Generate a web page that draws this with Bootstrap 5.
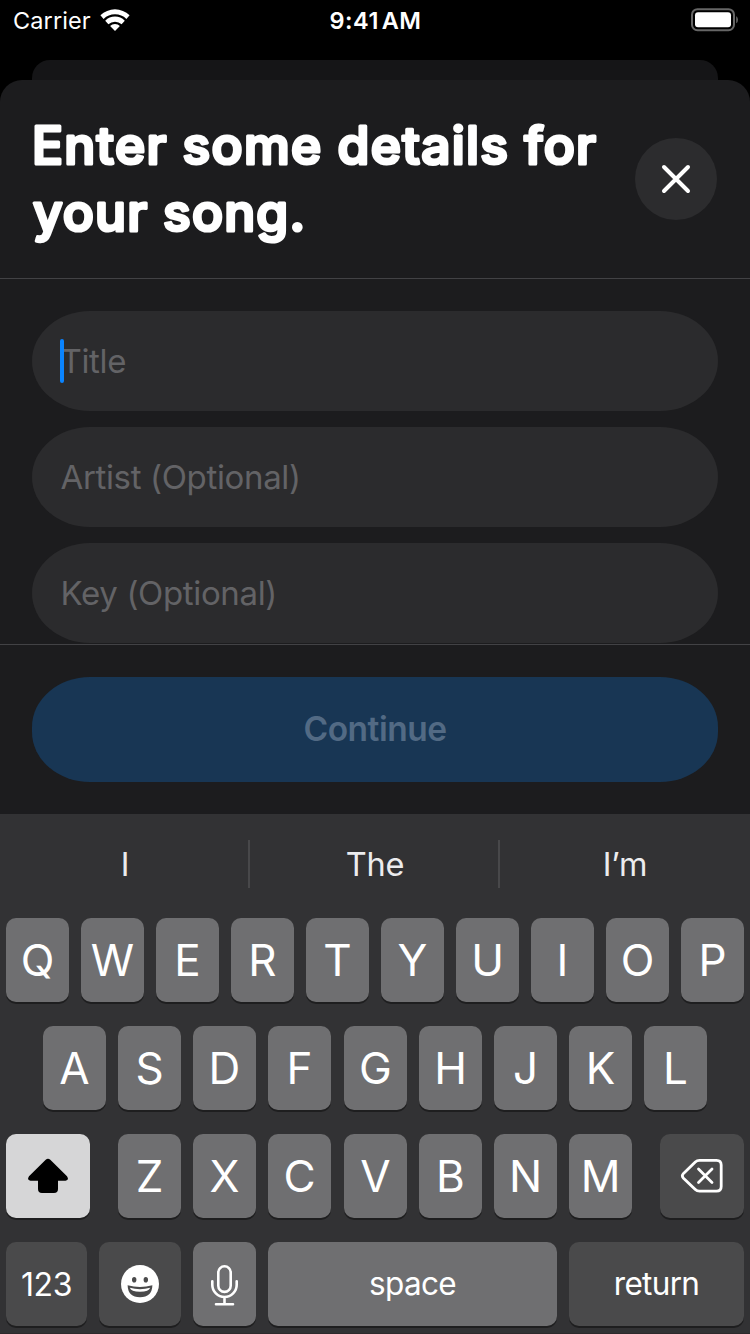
<!DOCTYPE html>
<html lang="en" data-bs-theme="dark">
<head>
<meta charset="utf-8">
<meta name="viewport" content="width=device-width, initial-scale=1">
<title>Song details</title>
<link rel="stylesheet" href="https://cdn.jsdelivr.net/npm/bootstrap@5.3.0/dist/css/bootstrap.min.css">
<style>
  body { width: 750px; height: 1334px; background: #000; color: #fff; font-family: Inter, "Liberation Sans", sans-serif; line-height: 1; }
  svg { display: block; }
  .status { height: 60px; padding: 0 12px 0 13px; }
  .status > div { height: 40px; flex: 1 1 0; font-size: 23.5px; }
  .status span { padding-top: 2px; }
  .carrier { letter-spacing: .1px; }
  .clock { font-weight: 600; letter-spacing: .5px; word-spacing: -3.5px; }
  .sheet-behind { height: 20px; margin: 0 32px; background: #151517; border-radius: 18px 18px 0 0; }
  .sheet { height: 734px; background: #1c1c1e; border-radius: 22px 22px 0 0; }
  .sheet-head { height: 199px; padding: 0 33px 0 32px; border-bottom: 1px solid #424245; }
  /* the round-joined outline softens the letter corners */
  .sheet-head text { font-size: 51.5px; font-weight: 500; fill: #fff; stroke: #fff; stroke-width: 3.2px; stroke-linejoin: round; stroke-linecap: round; }
  .close-btn { width: 82px; height: 82px; background: #2c2c2e; color: #fff; }
  .fields { height: 365px; padding: 32px 32px 0; gap: 16px; }
  .pill { border-radius: 58px / 50px; }
  .field { height: 100px; padding: 0 28.5px; background: #2b2b2d; color: #636366; font-size: 33px; letter-spacing: -.35px; flex: none; }
  .caret { left: 28px; top: 28px; width: 4px; height: 44px; border-radius: 2px; background: #0a84ff; }
  .sheet-foot { height: 170px; padding: 32px 32px 0; border-top: 1px solid #424245; }
  .go { height: 105px; background: #183654; color: #526a84; font-size: 33.5px; font-weight: 600; letter-spacing: -.5px; }
  .keyboard { height: 520px; background: #323234; padding: 0 6px; border-bottom: 1px solid #2d292b; }
  .suggest { height: 100px; margin: 0 -6px 4px; font-size: 32.5px; letter-spacing: -.2px; color: #ececee; }
  .suggest > div { width: 250px; padding-top: 2px; }
  .suggest i { width: 2px; height: 48px; right: 0; top: 26px; background: #48484a; }
  .keys { gap: 12px; height: 84px; margin-bottom: 24px; justify-content: center; }
  .key { width: 63px; height: 84px; border-radius: 10px; background: #6f6f71; box-shadow: 0 2px 0 #1e1e1f; font-size: 44px; font-weight: 400; flex: none; }
  [data-keys^=A] .key:nth-child(4), [data-keys^=Z] .key:nth-child(3) { margin-right: 1px; }
  .key-dark { background: #4a4a4b; }
  .key-word { font-size: 31.5px; letter-spacing: -.7px; }
  .key-num { font-size: 32px; letter-spacing: -.4px; padding-top: 2px; }
  .w84 { width: 84px; }
</style>
<script src="https://cdn.jsdelivr.net/npm/bootstrap@5.3.0/dist/js/bootstrap.bundle.min.js"></script>
</head>
<body class="m-0 overflow-hidden">
  <div class="status d-flex">
    <div class="carrier d-flex align-items-center"><span>Carrier</span>
      <svg class="ms-2" width="32" height="24" viewBox="0 0 32 24" fill="#fff"><path d="M1.4 7.3A20.9 20.9 0 0 1 30.6 7.3L27.4 10.9A16.4 16.4 0 0 0 4.6 10.9Z"/><path d="M6.2 12.7A13.8 13.8 0 0 1 25.8 12.7L22.6 16.3A9.5 9.5 0 0 0 9.4 16.3Z"/><path d="M11.1 18.1A6.9 6.9 0 0 1 20.9 18.1L16 23Z"/></svg>
    </div>
    <div class="clock d-flex align-items-center justify-content-center"><span>9:41 AM</span></div>
    <div class="d-flex align-items-center justify-content-end">
      <svg width="48" height="24" viewBox="0 0 48 24"><rect x="2" y="1.2" width="42" height="21" rx="5.5" fill="none" stroke="#666" stroke-width="2"/><rect x="5" y="4.2" width="36" height="15" rx="3" fill="#fff"/><path d="M46.3 8.2c2 1 2 6 0 7z" fill="#777"/></svg>
    </div>
  </div>
  <div class="sheet-behind"></div>
  <main class="sheet">
    <header class="sheet-head d-flex align-items-center justify-content-between">
      <h1 class="m-0"><svg width="580" height="134" viewBox="0 0 580 134"><text x="0" y="51.5" textLength="564">Enter some details for</text><text x="1" y="118.5" textLength="272">your song.</text></svg></h1>
      <button class="close-btn btn rounded-circle border-0 p-0 d-flex align-items-center justify-content-center" aria-label="Close">
        <svg width="32" height="32" viewBox="0 0 32 32" stroke="#fff" stroke-width="4" stroke-linecap="round"><path d="M4 4L28 28M28 4L4 28"/></svg>
      </button>
    </header>
    <div class="fields d-flex flex-column">
      <div class="field pill position-relative d-flex align-items-center"><span>Title</span><span class="caret position-absolute"></span></div>
      <div class="field pill d-flex align-items-center"><span>Artist (Optional)</span></div>
      <div class="field pill d-flex align-items-center"><span>Key (Optional)</span></div>
    </div>
    <footer class="sheet-foot">
      <button class="go pill btn border-0 w-100 p-0">Continue</button>
    </footer>
  </main>
  <section class="keyboard">
    <div class="suggest d-flex text-center">
      <div class="position-relative d-flex align-items-center justify-content-center">I<i class="position-absolute"></i></div>
      <div class="position-relative d-flex align-items-center justify-content-center">The<i class="position-absolute"></i></div>
      <div class="d-flex align-items-center justify-content-center">I’m</div>
    </div>
    <div class="keys d-flex" data-keys="QWERTYUIOP"></div>
    <div class="keys d-flex" data-keys="ASDFGHJKL"></div>
    <div class="keys d-flex justify-content-between">
      <div class="key w84 d-flex align-items-center justify-content-center" style="background:#d6d6d7">
        <svg width="42" height="36" viewBox="0 0 42 36"><path d="M18.7 1.8Q21 -.3 23.3 1.8L40 18.3Q42.5 22.3 38.5 22.8H31V31Q31 35 27 35H15Q11 35 11 31V22.8H3.5Q-.5 22.3 2 18.3Z" fill="#000"/></svg>
      </div>
      <div class="keys d-flex m-0" data-keys="ZXCVBNM"></div>
      <div class="key w84 key-dark d-flex align-items-center justify-content-center">
        <svg width="44" height="36" viewBox="0 0 44 36" fill="none" stroke="#fff" stroke-width="2.8" stroke-linecap="round" stroke-linejoin="round"><path d="M19.5 2.4H36.5Q41.2 2.4 41.2 7V28.5Q41.2 33.2 36.5 33.2H19.5Q17 33.2 15.3 31.5L3.5 20.2Q1.2 17.8 3.5 15.4L15.3 4.1Q17 2.4 19.5 2.4Z"/><path d="M18.5 11L32 24.5M32 11L18.5 24.5"/></svg>
      </div>
    </div>
    <div class="keys d-flex m-0">
      <div class="key key-dark key-num d-flex align-items-center justify-content-center" style="width:81px">123</div>
      <div class="key key-dark d-flex align-items-center justify-content-center" style="width:82px">
        <svg width="38" height="38" viewBox="0 0 38 38"><circle cx="19" cy="19" r="19" fill="#fff"/><ellipse cx="13.2" cy="14.7" rx="2.2" ry="2.8" fill="#4a4a4b"/><ellipse cx="24.8" cy="14.7" rx="2.2" ry="2.8" fill="#4a4a4b"/><path d="M6.6 20.2Q19 23.8 31.4 20.2Q31 32.2 19 32.2Q7 32.2 6.6 20.2Z" fill="#4a4a4b"/><path d="M8.8 22.8Q19 25.7 29.2 22.8Q28 26.8 19 26.8Q10 26.8 8.8 22.8Z" fill="#fff"/></svg>
      </div>
      <div class="key d-flex align-items-center justify-content-center">
        <svg class="mt-1" width="28" height="42" viewBox="0 0 28 42" fill="none" stroke="#fff" stroke-width="2.6" stroke-linecap="round"><rect x="7.3" y="1.3" width="12.4" height="25.6" rx="6.2"/><path d="M1.3 16.3V19.8A12.2 12.2 0 0 0 25.7 19.8V16.3M13.5 32.3V39M5 39.2H22"/></svg>
      </div>
      <div class="key key-word d-flex align-items-center justify-content-center" style="width:289px"><span>space</span></div>
      <div class="key key-dark key-word d-flex align-items-center justify-content-center" style="width:175px"><span>return</span></div>
    </div>
  </section>
<script>
  document.querySelectorAll('[data-keys]').forEach(row => {
    for (const c of row.dataset.keys) {
      const k = document.createElement('div');
      k.className = 'key d-flex align-items-center justify-content-center';
      k.textContent = c;
      row.append(k);
    }
  });
</script>
</body>
</html>
